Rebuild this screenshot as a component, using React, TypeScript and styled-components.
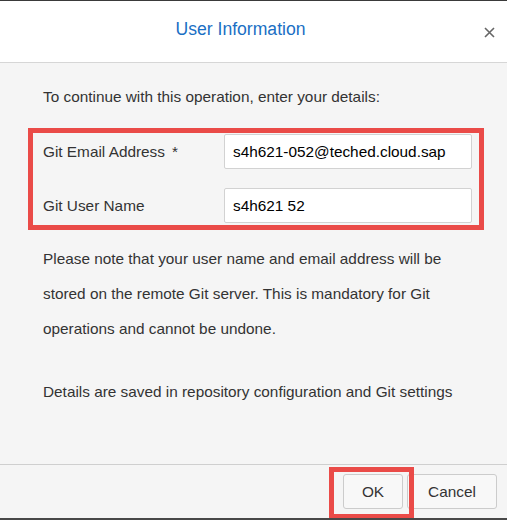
import React from "react";
import styled, { createGlobalStyle } from "styled-components";

const Global = createGlobalStyle`
  html, body { margin: 0; padding: 0; background: #f5f5f5; }
  * { box-sizing: border-box; }
  body { font-family: "Liberation Sans", Arial, sans-serif; }
`;

const FS = "15.35px";

const Dialog = styled.div`
  width: 507px;
  height: 520px;
  display: flex;
  flex-direction: column;
  border-top: 1px solid #3a3a3a;
  border-bottom: 2px solid #484848;
  background: #f5f5f5;
  overflow: hidden;
`;

const Header = styled.header`
  height: 62px;
  flex: none;
  display: flex;
  align-items: center;
  padding-right: 9px;
  background: #ffffff;
  border-bottom: 1px solid #d6d6d6;
`;

const Title = styled.h1`
  flex: 1;
  margin: 0 0 5px 0;
  text-align: center;
  font-size: 17.6px;
  font-weight: normal;
  color: #1a6fc4;
`;

const CloseButton = styled.button`
  width: 17px;
  height: 17px;
  padding: 0;
  margin-top: 2px;
  border: none;
  background: transparent;
  display: flex;
  align-items: center;
  justify-content: center;
`;

const Body = styled.main`
  flex: 1;
  padding: 16px 23px 0 28px;
  display: flex;
  flex-direction: column;
  color: #333;
  font-size: ${FS};
`;

const Text = styled.p<{ $top?: number }>`
  margin: ${(p) => p.$top ?? 0}px 14px 0 15px;
  line-height: 35px;
`;

const FieldBox = styled.div`
  margin-top: 14px;
  border: 5px solid #ea4b48;
  padding: 1px 7px 2px 10px;
  display: flex;
  flex-direction: column;
  gap: 19px;
`;

const FieldRow = styled.div`
  display: grid;
  grid-template-columns: 181px 248px;
  align-items: center;
`;

const Label = styled.label`
  color: #333;
  font-size: ${FS};
`;

const Required = styled.span`
  margin-left: 7px;
`;

const Input = styled.input`
  height: 35px;
  width: 248px;
  border: 1px solid #d2d2d2;
  border-radius: 2px;
  background: #fff;
  padding: 0 8px;
  font-family: "Liberation Sans", Arial, sans-serif;
  font-size: ${FS};
  color: #000;
  outline: none;
`;

const Footer = styled.footer`
  height: 54px;
  flex: none;
  border-top: 1px solid #cfcfcf;
  display: flex;
  justify-content: flex-end;
  align-items: flex-start;
  padding: 9px 10px 0 0;
  gap: 4px;
`;

const Button = styled.button<{ $w: number }>`
  width: ${(p) => p.$w}px;
  height: 35px;
  background: #f8f8f8;
  border: 1px solid #cccccc;
  border-radius: 3px;
  font-family: "Liberation Sans", Arial, sans-serif;
  font-size: ${FS};
  color: #333;
  padding: 0;
`;

const Highlight = styled.span`
  position: relative;
  display: inline-flex;
  &::after {
    content: "";
    position: absolute;
    left: -14px;
    right: -11px;
    top: -7px;
    bottom: -10px;
    border: 5px solid #ea4b48;
    pointer-events: none;
  }
`;

export default function App() {
  return (
    <>
      <Global />
      <Dialog>
        <Header>
          <Title>User Information</Title>
          <CloseButton aria-label="Close">
            <svg width="11" height="11" viewBox="0 0 11 11">
              <path d="M1 1 L10 10 M10 1 L1 10" stroke="#666" strokeWidth="1.6" fill="none" />
            </svg>
          </CloseButton>
        </Header>
        <Body>
          <Text>To continue with this operation, enter your details:</Text>
          <FieldBox>
            <FieldRow>
              <Label>
                Git Email Address<Required>*</Required>
              </Label>
              <Input defaultValue="s4h621-052@teched.cloud.sap" />
            </FieldRow>
            <FieldRow>
              <Label>Git User Name</Label>
              <Input defaultValue="s4h621 52" />
            </FieldRow>
          </FieldBox>
          <Text $top={11}>
            Please note that your user name and email address will be stored on the remote Git
            server. This is mandatory for Git operations and cannot be undone.
          </Text>
          <Text $top={28}>Details are saved in repository configuration and Git settings</Text>
        </Body>
        <Footer>
          <Highlight>
            <Button $w={60}>OK</Button>
          </Highlight>
          <Button $w={90}>Cancel</Button>
        </Footer>
      </Dialog>
    </>
  );
}
